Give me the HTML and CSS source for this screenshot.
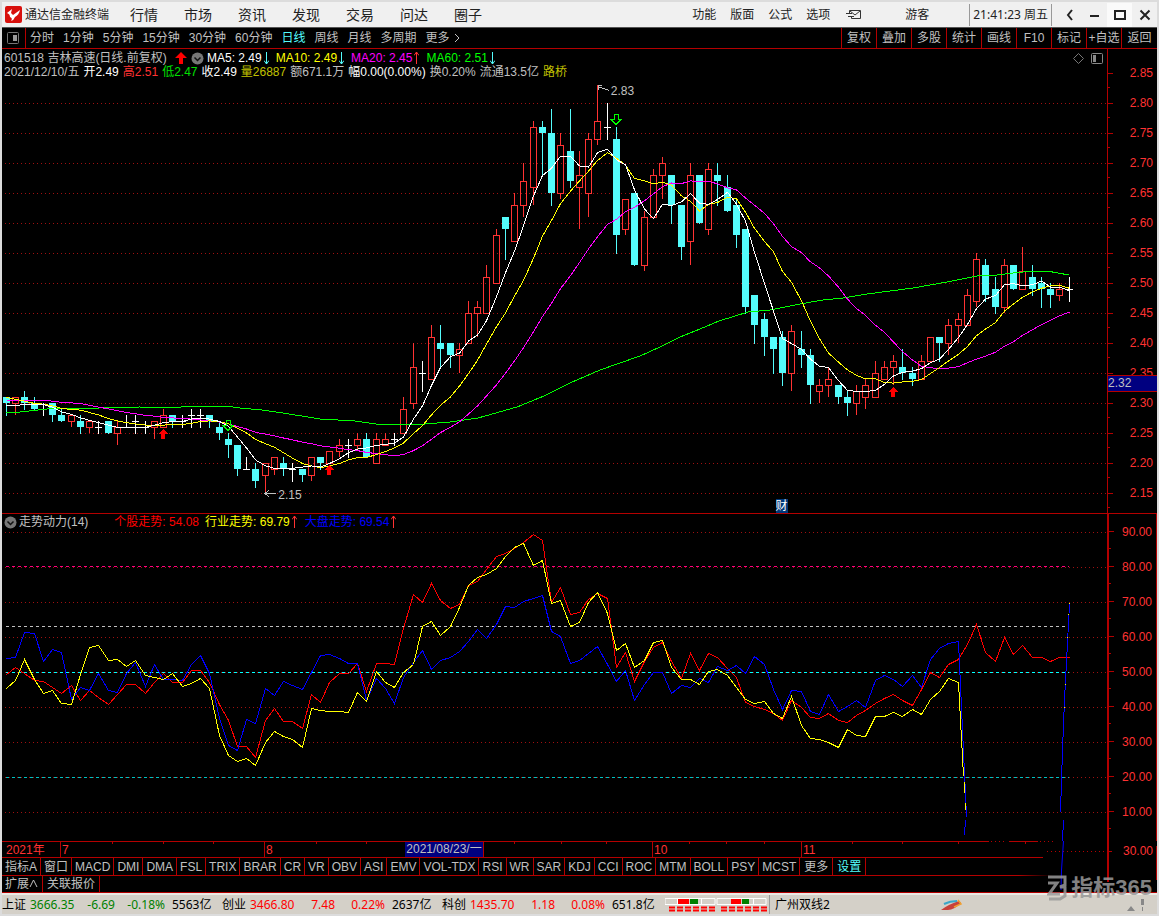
FILE: index.html
```html
<!DOCTYPE html>
<html lang="zh-CN">
<head>
<meta charset="utf-8">
<title>通达信金融终端</title>
<link rel="stylesheet" href="styles.css">
</head>
<body>
<div class="app">
  <header class="titlebar">
    <svg class="logo" width="17" height="17" viewBox="0 0 17 17"><rect width="17" height="17" rx="2" fill="#d8100c"/><path d="M2 7 L7 3 L6 7 L8 9 L15 4 Q14 9 10 11 Q9 14 6 15 Q8 12 5 11 Q5 8 2 7Z" fill="#fff"/></svg>
    <span class="brand">通达信金融终端</span>
    <nav class="menu">
      <a href="#">行情</a><a href="#">市场</a><a href="#">资讯</a><a href="#">发现</a><a href="#">交易</a><a href="#">问达</a><a href="#">圈子</a>
    </nav>
    <nav class="tools">
      <a href="#">功能</a><a href="#">版面</a><a href="#">公式</a><a href="#">选项</a>
      <a href="#" aria-label="消息"><svg width="16" height="11" viewBox="0 0 16 11" fill="none" stroke="#333"><path d="M3.500 4V1.500H14.500V9.500H5.500V7.500M4 2L9 6L14 2M0 4.500H6M2 7.500H8"/></svg></a>
    </nav>
    <a class="guest" href="#">游客</a>
    <span class="clock">21:41:23 周五</span>
    <div class="winbtns">
      <button aria-label="返回"><svg width="12" height="12" viewBox="0 0 12 12"><path d="M8 1L4 6L8 11" fill="none" stroke="#222" stroke-width="2"/></svg></button>
      <button aria-label="最小化"><svg width="12" height="12" viewBox="0 0 12 12"><path d="M1 7H10" stroke="#222" stroke-width="2"/></svg></button>
      <button class="lit" aria-label="最大化"><svg width="12" height="12" viewBox="0 0 12 12"><rect x="1" y="2" width="10" height="8" fill="none" stroke="#222" stroke-width="2"/></svg></button>
      <button aria-label="关闭"><svg width="12" height="12" viewBox="0 0 12 12"><path d="M1.500 1.500L10.500 10.500M10.500 1.500L1.500 10.500" stroke="#222" stroke-width="2"/></svg></button>
    </div>
  </header>

  <div class="toolbar">
    <button class="side" aria-label="侧栏"><svg width="12" height="12" viewBox="0 0 12 12"><rect x=".5" y=".5" width="11" height="11" rx="1" fill="none" stroke="#777"/><rect x="6" y="3" width="4" height="6" fill="#999"/></svg></button>
    <div class="periods">
      <button>分时</button><button>1分钟</button><button>5分钟</button><button>15分钟</button><button>30分钟</button><button>60分钟</button><button class="on">日线</button><button>周线</button><button>月线</button><button>多周期</button>
      <button class="more">更多<svg width="6" height="10" viewBox="0 0 6 10"><path d="M1 1L5 5L1 9" fill="none" stroke="#c0c0c0"/></svg></button>
    </div>
    <div class="actions">
      <button>复权</button><button>叠加</button><button>多股</button><button>统计</button><button>画线</button><button>F10</button><button>标记</button><button>+自选</button><button>返回</button>
    </div>
  </div>

  <section class="panel price">
    <div class="plot">
      <svg class="chart" id="price" viewBox="2 49 1105 464" preserveAspectRatio="none"></svg>
      <div class="legend">
        <div class="row names">
          <span class="stock">601518 吉林高速(日线.前复权)</span>
          <svg class="up" width="12" height="12" viewBox="0 0 12 12"><path d="M6 0L12 6H8V12H4V6H0Z" fill="red"/></svg>
          <svg class="drop" width="13" height="13" viewBox="0 0 13 13"><circle cx="6.500" cy="6.500" r="6" fill="#777"/><path d="M3.500 5.500L6.500 8.500L9.500 5.500" fill="none" stroke="#111" stroke-width="1.500"/></svg>
          <span class="ma white">MA5: 2.49<svg width="5" height="14" viewBox="0 0 5 14"><path d="M2.500 1V13M0 9.500L2.500 13L5 9.500" fill="none" stroke="#54fcfc"/></svg></span>
          <span class="ma yellow">MA10: 2.49<svg width="5" height="14" viewBox="0 0 5 14"><path d="M2.500 1V13M0 9.500L2.500 13L5 9.500" fill="none" stroke="#54fcfc"/></svg></span>
          <span class="ma magenta">MA20: 2.45<svg width="5" height="14" viewBox="0 0 5 14"><path d="M2.500 13V1M0 4.500L2.500 1L5 4.500" fill="none" stroke="#ff3232"/></svg></span>
          <span class="ma lime">MA60: 2.51<svg width="5" height="14" viewBox="0 0 5 14"><path d="M2.500 1V13M0 9.500L2.500 13L5 9.500" fill="none" stroke="#54fcfc"/></svg></span>
        </div>
        <div class="row quote">
          <span>2021/12/10/五</span><span class="white">开2.49</span><span class="red">高2.51</span><span class="green">低2.47</span><span class="white">收2.49</span><span class="gold">量26887</span><span>额671.1万</span><span class="white">幅0.00(0.00%)</span><span>换0.20%</span><span>流通13.5亿</span><span class="gold">路桥</span>
        </div>
      </div>
      <div class="corner">
        <svg width="11" height="11" viewBox="0 0 11 11"><path d="M5.500 .5L10.500 5.500L5.500 10.500L.5 5.500Z" fill="none" stroke="#777"/></svg>
        <svg width="12" height="11" viewBox="0 0 12 11"><rect x=".5" y=".5" width="11" height="10" rx="1" fill="none" stroke="#888"/><rect x="2" y="2" width="3" height="7" fill="#888"/></svg>
      </div>
      <span class="mark high">2.83</span>
      <span class="mark low">2.15</span>
      <span class="fin">财</span>
    </div>
    <div class="axis">
      <span>2.85</span><span>2.80</span><span>2.75</span><span>2.70</span><span>2.65</span><span>2.60</span><span>2.55</span><span>2.50</span><span>2.45</span><span>2.40</span><span>2.35</span><span>2.30</span><span>2.25</span><span>2.20</span><span>2.15</span>
      <b class="cursor">2.32</b>
    </div>
  </section>

  <section class="panel power">
    <div class="plot">
      <svg class="chart" id="power" viewBox="2 514 1105 327" preserveAspectRatio="none"></svg>
      <div class="legend">
        <div class="row names">
          <svg width="13" height="13" viewBox="0 0 13 13"><circle cx="6.500" cy="6.500" r="6" fill="#777"/><path d="M3.500 5.500L6.500 8.500L9.500 5.500" fill="none" stroke="#111" stroke-width="1.500"/></svg>
          <span class="pname">走势动力(14)</span>
          <span class="ma pure">个股走势: 54.08</span>
          <span class="ma yellow">行业走势: 69.79<svg width="5" height="14" viewBox="0 0 5 14"><path d="M2.500 13V1M0 4.500L2.500 1L5 4.500" fill="none" stroke="#ff3232"/></svg></span>
          <span class="ma blue">大盘走势: 69.54<svg width="5" height="14" viewBox="0 0 5 14"><path d="M2.500 13V1M0 4.500L2.500 1L5 4.500" fill="none" stroke="#ff3232"/></svg></span>
        </div>
      </div>
    </div>
    <div class="axis">
      <span>90.00</span><span>80.00</span><span>70.00</span><span>60.00</span><span>50.00</span><span>40.00</span><span>30.00</span><span>20.00</span><span>10.00</span>
    </div>
  </section>

  <div class="lower">
    <div class="dates">
      <div class="ruler">
        <svg class="ticks" viewBox="2 841 1105 17" preserveAspectRatio="none">
          <path d="M2 841.500H989M1009 841.500H1038M2 857.500H1043" />
          <path class="dots" d="M991 841.500H1007M1040 841.500H1056M1047 851.500H1106"/>
          <path d="M112.500 841V844M163.500 841V844M213.500 841V844M316.500 841V844M366.500 841V844M514.500 841V844M561.500 841V844M606.500 841V844M689.500 841V844M726.500 841V844M764.500 841V844M852.500 841V844M902.500 841V844M958.500 841V844M1025.500 841V844"/>
        </svg>
        <span class="m0">2021年</span><span class="m1">7</span><span class="m2">8</span><span class="m3">10</span><span class="m4">11</span>
        <b class="day">2021/08/23/一</b>
      </div>
      <span class="tail">30.00</span>
    </div>
    <div class="tabs">
      <button>指标A</button><button>窗口</button><button>MACD</button><button>DMI</button><button>DMA</button><button>FSL</button><button>TRIX</button><button>BRAR</button><button>CR</button><button>VR</button><button>OBV</button><button>ASI</button><button>EMV</button><button>VOL-TDX</button><button>RSI</button><button>WR</button><button>SAR</button><button>KDJ</button><button>CCI</button><button>ROC</button><button>MTM</button><button>BOLL</button><button>PSY</button><button>MCST</button><button class="wide">更多</button><button class="wide on">设置</button>
    </div>
    <div class="tabs second">
      <button class="wide">扩展<svg width="9" height="9" viewBox="0 0 9 9"><path d="M1 8L4.500 1L8 8" fill="none" stroke="#c0c0c0"/></svg></button><button class="wide">关联报价</button>
    </div>
    <svg class="spill" width="117" height="52" viewBox="1040 841 117 52">
      <path d="M1063.500 841L1061.500 870L1061 890" stroke="#00f" fill="none"/>
      <path d="M1108 841V882" stroke="#b40000" stroke-width="2"/>
      <path d="M1156.500 846V880M1107 851.500H1112M1107 868.500H1109" stroke="#b40000"/>
    </svg>
  </div>

  <footer class="status">
    <div class="index down"><span class="n">上证</span><span>3666.35</span><span class="r">-6.69</span><span class="r">-0.18%</span><span class="v">5563亿</span></div>
    <div class="index rise"><span class="n">创业</span><span>3466.80</span><span class="r">7.48</span><span class="r">0.22%</span><span class="v">2637亿</span></div>
    <div class="index rise"><span class="n">科创</span><span>1435.70</span><span class="r">1.18</span><span class="r">0.08%</span><span class="v">651.8亿</span></div>
    <svg class="meter" width="102" height="16" viewBox="0 0 102 16">
      <path d="M0 1.500H50V7.500H0ZM52 1.500H101V7.500H52ZM12.500 2V7M36.500 2V7M66.500 2V7M88.500 2V7" fill="none" stroke="#fff"/>
      <path d="M13 2h11v5h-11zM66 2h10v5h-10z" fill="red"/><path d="M25 2h8v5h-8zM77 2h7v5h-7z" fill="green"/>
      <path d="M4 10.500H50M4 13.500H50M56 10.500H102M56 13.500H102" stroke="red" stroke-width="2" stroke-dasharray="6 2"/>
    </svg>
    <span class="host">广州双线2</span>
    <svg class="bird" width="24" height="14" viewBox="0 0 24 14"><path d="M1 12Q9 6 19 3L21 5Q14 12 8 12Z" fill="#c8413a"/><path d="M4 6Q10 3 17 3" stroke="#3aa6c8" stroke-width="2" fill="none"/><path d="M14 9L21 6L18 2" stroke="#f0a030" fill="none" stroke-width="1.500"/></svg>
    <svg class="tray" width="26" height="16" viewBox="0 0 26 16" fill="#888"><path d="M0 14L4 9L8 14ZM14 2h3v6h-3zM15 10h1v4h-1z"/></svg>
  </footer>

  <div class="stamp">
    <svg width="21" height="26" viewBox="0 0 21 26" fill="none" stroke="#999" stroke-width="3"><path d="M1 2H18L18 10L13 12H18V21L13 24H2"/><path d="M1 8H10L2 19H13"/></svg>
    <span>指标365</span>
  </div>
</div>
<script src="chart.js"></script>
</body>
</html>
```
FILE: styles.css
```css
* { box-sizing: border-box; }
body {
  margin: 0;
  background: #dcdcdc;
  color: #c0c0c0;
  font: 12px/14px "Liberation Sans", "Noto Sans CJK SC", sans-serif;
}
button {
  margin: 0;
  padding: 0;
  border: 0;
  background: none;
  color: inherit;
  font: inherit;
  white-space: nowrap;
}
a { color: inherit; text-decoration: none; }
svg { display: block; flex: none; }
span, b { white-space: nowrap; font-weight: normal; }

.app {
  position: relative;
  padding: 2px;
  overflow: hidden;
}

/* title bar */
.titlebar {
  display: flex;
  align-items: center;
  height: 26px;
  padding-left: 3px;
  background: #f0f0f0;
  border-bottom: 1px solid #555;
  color: #222;
}
.brand { margin-left: 3px; }
.menu { display: flex; gap: 26px; margin-left: 21px; font-size: 14px; }
.tools { display: flex; align-items: center; gap: 14px; margin-left: auto; }
.tools a:last-child { margin-left: 2px; }
.guest { margin: 0 40px 0 43px; }
.clock {
  padding: 0 3px;
  border-left: 1px solid #999;
  border-right: 1px solid #999;
  font: 12px/22px "Noto Sans", "Noto Sans CJK SC", sans-serif;
}
.winbtns { display: flex; margin-left: 5px; }
.winbtns button {
  display: flex;
  align-items: center;
  justify-content: center;
  width: 25px;
  height: 24px;
}
.winbtns .lit { background: #fafafa; }

/* period toolbar */
.toolbar {
  display: flex;
  height: 21px;
  background: #000;
  border-bottom: 1px solid #b40000;
}
.side {
  display: flex;
  align-items: center;
  width: 24px;
  padding-left: 5px;
  border-right: 1px solid #b40000;
}
.periods { display: flex; align-items: center; gap: 9px; margin-left: 4px; }
.more { display: flex; align-items: center; gap: 4px; }
.on { color: #54fcfc; }
.actions { display: flex; margin-left: auto; }
.actions button {
  width: 35px;
  border-left: 1px solid #b40000;
  text-align: center;
}
.actions button:last-child { width: 36px; }

/* chart panels */
.panel { display: flex; background: #000; border-bottom: 1px solid #b40000; }
.price { height: 465px; }
.power { height: 327px; border-bottom: 0; }
.plot { position: relative; flex: 1; min-width: 0; }
.chart { width: 100%; height: 100%; shape-rendering: crispEdges; }
.legend { position: absolute; left: 2px; top: 2px; }
.row { display: flex; align-items: center; height: 14px; }
.quote { gap: 4px; }
.stock { width: 171px; }
.drop { margin: 0 3px 0 4px; }
.ma { display: flex; align-items: center; gap: 2px; margin-right: 7px; }
.power .names { margin-top: -1px; }
.pname { margin: 0 26px 0 2px; }
.power .ma { margin-right: 6px; }
.power .yellow { margin-right: 8px; }
.white { color: #fff; }
.yellow { color: #ff0; }
.magenta { color: #f0f; }
.lime { color: #0f0; }
.red { color: #ff3232; }
.pure { color: #f00; }
.green { color: #00e000; }
.gold { color: #c0c000; }
.blue { color: #00f; }
.corner { position: absolute; right: 4px; top: 4px; display: flex; gap: 7px; }
.mark { position: absolute; }
.high { left: 55.100%; top: 35px; }
.low { left: 25%; top: 439px; }
.fin {
  position: absolute;
  left: 70%;
  bottom: 0;
  background: #003878;
  color: #fff;
}

.axis {
  position: relative;
  width: 50px;
  border-left: 1px solid #b40000;
  color: #ff3232;
}
.axis span {
  display: flex;
  align-items: center;
  justify-content: flex-end;
  padding-right: 4px;
  background:
    linear-gradient(#b40000, #b40000) 0 50% / 5px 1px no-repeat,
    linear-gradient(#b40000, #b40000) 0 100% / 2px 1px no-repeat;
}
.price .axis { padding-top: 9px; }
.price .axis span { height: 30px; }
.power .axis { border-left-width: 2px; border-right: 1px solid #b40000; }
.power .axis span { height: 35px; }
.axis .cursor {
  position: absolute;
  left: 0;
  right: 0;
  top: 326px;
  height: 17px;
  background: #000080;
  border: 1px solid #b40000;
  border-width: 1px 0;
  color: #c0c0c0;
}

/* date ruler and indicator tabs */
.lower { position: relative; background: #000; border-bottom: 1px solid #b40000; }
.dates { display: flex; height: 17px; color: #ff3232; }
.ruler {
  position: relative;
  display: grid;
  grid-template-columns: 58fr 204fr 388fr 149fr 306fr;
  flex: 1;
  align-items: end;
}
.ticks {
  position: absolute;
  width: 100%;
  height: 17px;
  stroke: #b40000;
  shape-rendering: crispEdges;
}
.ticks .dots { stroke-dasharray: 1 3; }
.ruler span {
  height: 16px;
  line-height: 16px;
  padding-left: 1px;
  border-left: 1px solid #b40000;
}
.ruler .m0 { padding-left: 4px; border-left: 0; }
.day {
  position: absolute;
  left: 36.500%;
  top: 1px;
  padding: 0 1px;
  height: 15px;
  background: #000080;
  border-right: 1px solid #b40000;
  color: #c0c0c0;
}
.tail { width: 50px; padding: 3px 4px 0 0; text-align: right; }
.tabs { display: flex; height: 17px; }
.tabs button {
  display: flex;
  align-items: center;
  padding: 0 3px;
  border-right: 1px solid #b40000;
}
.tabs .wide { padding: 0 4px; }
.tabs .wide:first-child { padding-left: 3px; }
.tabs .on { color: #54fcfc; }
.tabs.second {
  background: linear-gradient(90deg, #b40000 88%, #000 91%) 0 0 / 100% 1px no-repeat;
}
.spill { position: absolute; right: 0; top: 0; }

/* status bar */
.status {
  display: flex;
  align-items: center;
  height: 21px;
  background: #d4d0c8;
  border-top: 2px solid #ece9e4;
  color: #000;
  font: 12px/19px "Noto Sans", "Noto Sans CJK SC", sans-serif;
}
.index { display: grid; grid-template-columns: 28px 46px 39px 50px 57px; }
.index .r { text-align: right; }
.index .v { padding-left: 7px; }
.index .n, .index .v { color: #000; }
.down { color: #008000; }
.rise { color: #f00; }
.meter { margin: 0 2px 0 3px; }
.host { border-left: 1px solid #999; padding-left: 5px; }
.bird { margin: 0 auto 0 110px; }
.tray { margin-right: 4px; }

.stamp {
  position: absolute;
  right: 7px;
  bottom: 15px;
  display: flex;
  align-items: center;
  gap: 3px;
  color: #999;
  font: bold 22px/26px "Liberation Sans", "Noto Sans CJK SC", sans-serif;
  opacity: .85;
}
.stamp span { font-weight: bold; }
```
FILE: chart.js
```javascript
const NS = "http://www.w3.org/2000/svg";
const RED = "#ff3232", CYAN = "#54fcfc";
const xAt = i => Math.round(6 + i * 9.24);
const yAt = cents => 73 + (285 - cents) * 6;

function add(svg, tag, attrs) {
  const el = document.createElementNS(NS, tag);
  for (const k in attrs) el.setAttribute(k, attrs[k]);
  svg.appendChild(el);
}
function line(svg, pts, color, extra) {
  add(svg, "polyline", Object.assign({
    points: pts.map(p => p.join(",")).join(" "), fill: "none", stroke: color
  }, extra));
}

// kind (r rising, c falling, d doji), high, body top, body bottom, low
const days = `c231 231 230 228|r231 231 230 228|c232 231 230 229|c231 230 229 229|d230 229 229 228|c230 230 228 227
c229 228 227 227|r228 228 227 226|c228 227 226 225|r227 227 226 225|d227 226 226 225|c227 227 225 225|r227 226 225 223
d228 226 226 226|d228 227 227 225|d227 226 226 225|r227 227 226 224|r229 228 226 226|c228 228 227 226|d228 227 227 226
d229 228 228 226|d229 228 228 226|c228 228 227 226|c227 226 225 224|c225 224 223 221|c223 223 219 218|d221 219 219 219
c220 219 217 216|r220 220 218 215|r221 221 219 218|c221 220 219 218|d220 219 219 217|c219 219 218 217|r221 221 218 217
c221 221 220 219|r222 222 220 220|r224 223 222 221|d224 223 223 221|r225 224 223 222|c225 224 221 221|r225 224 220 220
r225 224 223 223|d225 224 224 223|r231 229 225 225|r240 236 230 229|d237 235 235 232|r243 241 234 234|c243 240 239 236
c240 240 238 236|r240 239 238 235|r247 245 240 240|r247 246 245 241|r253 251 245 245|r259 258 250 250|c261 261 259 254
r265 263 257 257|r270 267 263 261|r277 276 266 263|c277 276 275 268|c279 275 265 263|r275 273 265 264|c279 272 267 266
r272 268 266 259|r275 274 265 261|r283 277 274 273|d280 276 276 274|c276 274 258 255|r264 264 259 258|c265 265 253 253
r262 261 253 252|r269 268 261 261|r271 270 268 264|c268 268 263 260|c263 263 256 254|r270 268 257 253|c268 268 260 260
r270 269 259 258|c270 268 267 263|c268 266 262 262|c264 263 258 256|c259 259 246 245|c248 248 243 240|c245 244 241 238
c241 241 239 235|c242 241 235 233|r243 242 235 232|c242 239 238 236|c239 238 233 230|r234 233 232 230|r236 234 233 231
c233 233 231 230|c232 231 230 228|r233 232 230 228|r234 233 231 229|r237 235 231 231|r237 236 234 234|r238 237 236 233
c239 236 235 234|c236 235 234 233|r238 237 234 234|r241 241 237 237|c241 241 240 237|r244 243 240 238|r245 244 243 240
r249 248 243 243|r255 254 247 246|c254 253 248 247|c251 249 246 245|r254 253 246 245|c253 253 249 249|r256 252 249 249
c253 251 249 248|c251 250 249 246|c250 249 248 246|r250 249 248 247|d251 249 249 247`
  .split(/[|\n]/).map(s => ({ kind: s[0], v: s.slice(1).split(" ").map(Number) }));

const price = document.getElementById("price");
for (let c = 280; c >= 215; c -= 5) {
  line(price, [[5, yAt(c) + .5], [1106, yAt(c) + .5]], "#a01010", { "stroke-dasharray": "1 3" });
}
days.forEach((d, i) => {
  const x = xAt(i), [hi, top, bot, lo] = d.v.map(yAt);
  const color = { r: RED, c: CYAN, d: "#fff" }[d.kind];
  if (d.kind === "r") {
    line(price, [[x + .5, hi], [x + .5, top]], color);
    line(price, [[x + .5, bot], [x + .5, lo]], color);
    add(price, "rect", { x: x - 2.5, y: top + .5, width: 6, height: bot - top, fill: "none", stroke: color });
  } else {
    line(price, [[x + .5, hi], [x + .5, lo + 1]], color);
    add(price, "rect", { x: x - 3, y: top, width: 7, height: Math.max(1, bot - top), fill: color });
  }
});

// opening stretch is given, the rest is averaged from the closes
const close = days.map(d => d.kind === "c" ? d.v[2] : d.v[1]);
function average(n, head) {
  return close.map((_, i) => {
    const v = i < n - 1 ? head[i] : close.slice(i - n + 1, i + 1).reduce((a, b) => a + b) / n;
    return [xAt(i) + .5, yAt(v) + .5];
  });
}
line(price, [[6,412],[20,412],[29,411],[47,409],[100,408],[140,407],[165,408],[197,406],[225,406],[240,408],[262,410],[283,413],[320,419],[355,421],[376,424],[393,425],[425,424],[450,422],[478,418],[517,407],[544,396],[570,383],[600,370],[640,356],[660,347],[680,337],[700,329],[719,321],[748,312],[770,310],[800,304],[823,300],[843,298],[867,294],[890,291],[913,288],[947,282],[977,276],[997,275],[1013,273],[1033,271],[1047,271],[1069,275]], "#0f0");
line(price, average(20, [230.5,230.5,230.5,230.5,230.5,230.4,230.2,230.1,230,229.7,229.4,229.1,228.8,228.5,228.3,228,227.9,227.7,227.6]), "#f0f");
line(price, average(10, [231,230.7,230.4,230,229.9,229.6,229.2,229,228.9]), "#ff0");
line(price, average(5, [229.6,229.7,229.8,229.9]), "#fff");

for (const [x, y] of [[163, 429], [329, 465], [893, 387]]) {
  add(price, "path", { d: `M${x} ${y}l5 5h-3v5h-4v-5h-3z`, fill: "red" });
}
for (const [x, y] of [[228, 420], [616, 114]]) {
  add(price, "path", { d: `M${x - 2} ${y}.5h4v5h3l-5 5l-5 -5h3z`, fill: "none", stroke: "#0f0" });
}
add(price, "path", { d: "M609 90.500L598 86.500M598 90V85.500H602M276 493.500H265M269 490L265 493.500L269 497", fill: "none", stroke: "#c0c0c0" });

const power = document.getElementById("power");
for (const y of [532, 567, 602, 637, 672, 707, 742, 777, 812]) {
  line(power, [[5, y + .5], [1106, y + .5]], "#a01010", { "stroke-dasharray": "1 3" });
}
for (const [y, c] of [[566, "#ff0080"], [626, "#c0c0c0"], [672, "#00ffff"], [777, "#00c0c0"]]) {
  line(power, [[6, y + .5], [1069, y + .5]], c, { "stroke-dasharray": "3 3" });
}

// three stretches, each in thirds of a pixel from its own base
function series(a, b, c) {
  const part = (arr, start, base) => arr.map((v, i) => [xAt(start + i) + .5, Math.round(base + v / 3) + .5]);
  return part(a, 0, 510).concat(part(b, 42, 520), part(c, 84, 590));
}
const blue = series(
  [445,441,365,368,454,418,425,568,532,541,490,541,545,490,457,529,463,508,508,511,463,436,490,625,704,721,628,640,535,556,514,526,538,487,436,433,445,460,458,570,505,533],
  [550,470,427,391,448,421,412,394,363,328,355,311,259,262,244,235,226,333,347,430,421,400,379,431,482,449,541,491,457,457,520,496,502,475,485,439,451,436,460,409,433,508],
  [358,301,304,364,373,313,364,349,331,352,270,256,268,289,256,290,208,173,160,154]);
const red = series(
  [491,470,490,511,512,532,550,526,569,541,562,583,553,523,523,550,517,488,517,517,481,481,517,583,631,709,709,742,631,595,634,634,655,553,577,517,488,488,460,542,460,460],
  [431,325,221,247,188,239,265,252,194,184,147,107,100,83,67,41,61,245,200,283,277,238,220,234,440,395,482,424,380,367,424,475,398,451,398,411,445,472,545,559,568,580],
  [391,331,352,382,383,370,391,397,374,360,338,325,313,331,344,298,247,260,221,207,163,103,187,213,142,193,166,202,202,214,202,202]);
const yellow = series(
  [533,511,446,508,550,541,580,583,491,410,406,451,448,469,451,496,502,508,490,527,520,505,535,674,734,754,745,766,695,664,679,686,712,595,601,604,604,607,545,574,482,515],
  [502,457,433,317,304,346,319,262,196,170,162,143,107,82,68,136,119,250,241,317,307,247,217,280,391,368,442,419,365,361,442,478,478,491,452,448,466,500,536,550,544,580],
  [385,319,406,444,448,457,472,416,436,439,379,379,365,379,358,371,328,304,263,275]);
line(power, red, "#f00");
line(power, blue.concat([[966.5, 817]]), "#00f");
line(power, yellow.concat([[963.5, 776]]), "#ff0");
line(power, [[964.5, 782], [964.5, 793]], "#ff0");
line(power, [[965.5, 803], [965.5, 810]], "#ff0");
line(power, [[965.5, 820], [964.5, 835]], "#00f");
line(power, [[1060.5, 812], [1062.5, 750], [1064.5, 700], [1069.5, 604]], "#00f");
line(power, [[1063.5, 820], [1062.5, 841]], "#00f");
for (const [x, y] of [[1069, 603], [1068, 614], [1067, 637], [1065, 684], [1064, 707]]) {
  add(power, "rect", { x, y, width: 1, height: 1, fill: "#ff0" });
}
```
